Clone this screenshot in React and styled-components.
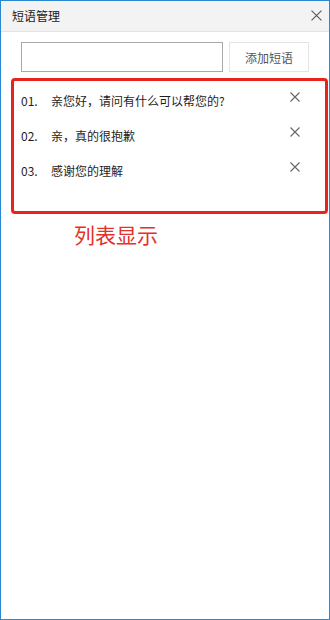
import React, { useState } from "react";
import styled, { createGlobalStyle } from "styled-components";

const GlobalStyle = createGlobalStyle`
  html, body {
    margin: 0;
    padding: 0;
    background: #fff;
  }
  body {
    font-family: "Noto Sans CJK SC", "Noto Sans", sans-serif;
  }
  * { box-sizing: border-box; }
`;

const Window = styled.div`
  width: 330px;
  height: 620px;
  border: 1px solid #2b88d0;
  background: #fff;
  display: flex;
  flex-direction: column;
`;

const TitleBar = styled.div`
  height: 31px;
  flex: none;
  display: flex;
  align-items: center;
  justify-content: space-between;
  padding: 0 7px 1px 11px;
  background: #f3f3f3;
  border-bottom: 1px solid #e3e3e3;
`;

const Title = styled.span`
  font-size: 12px;
  color: #1a1a1a;
`;

const IconButton = styled.button`
  border: none;
  background: transparent;
  padding: 0;
  margin: ${({ offset }) => offset || "0"};
  width: ${({ size }) => size}px;
  height: ${({ size }) => size}px;
  display: flex;
  align-items: center;
  justify-content: center;
  cursor: pointer;
  color: ${({ tone }) => tone || "#555"};
`;

const Body = styled.div`
  flex: 1;
  display: flex;
  flex-direction: column;
`;

const Toolbar = styled.div`
  display: flex;
  gap: 6px;
  padding: 10px 0 0 20px;
`;

const Input = styled.input`
  width: 202px;
  height: 30px;
  border: 1px solid #a8a8a8;
  padding: 0 6px;
  font-size: 12px;
  font-family: inherit;
  outline: none;
`;

const AddButton = styled.button`
  width: 80px;
  height: 30px;
  border: 1px solid #e4e4e4;
  background: #fff;
  color: #555;
  font-size: 12px;
  font-family: inherit;
  padding: 0;
  cursor: pointer;
`;

const ListBox = styled.div`
  margin: 6px 1px 0 10px;
  height: 136px;
  border: 3px solid #e8231c;
  border-radius: 4px;
  padding: 2px 25px 0 7px;
`;

const Row = styled.div`
  height: 35px;
  display: flex;
  align-items: center;
  font-size: 12px;
  color: #1e1e1e;
`;

const Num = styled.span`
  width: 30px;
  flex: none;
`;

const Phrase = styled.span`
  flex: 1;
`;

const Caption = styled.div`
  margin: 8px 0 0 73px;
  font-size: 21px;
  line-height: 24px;
  color: #e3322a;
`;

const Cross = ({ size = 10, width = 1.1 }) => (
  <svg width={size} height={size} viewBox="0 0 10 10">
    <path d="M0.5 0.5 L9.5 9.5 M9.5 0.5 L0.5 9.5" stroke="currentColor" strokeWidth={width} fill="none" />
  </svg>
);

const initial = ["亲您好，请问有什么可以帮您的?", "亲，真的很抱歉", "感谢您的理解"];

export default function App() {
  const [items, setItems] = useState(initial);
  const [text, setText] = useState("");

  const add = () => {
    if (!text.trim()) return;
    setItems([...items, text.trim()]);
    setText("");
  };

  return (
    <>
      <GlobalStyle />
      <Window>
        <TitleBar>
          <Title>短语管理</Title>
          <IconButton size={12}>
            <Cross size={11} width={1} />
          </IconButton>
        </TitleBar>
        <Body>
          <Toolbar>
            <Input value={text} onChange={(e) => setText(e.target.value)} />
            <AddButton onClick={add}>添加短语</AddButton>
          </Toolbar>
          <ListBox>
            {items.map((item, i) => (
              <Row key={i}>
                <Num>{String(i + 1).padStart(2, "0")}.</Num>
                <Phrase>{item}</Phrase>
                <IconButton
                  size={10}
                  tone="#666"
                  offset="-7px 0 0 0"
                  onClick={() => setItems(items.filter((_, j) => j !== i))}
                >
                  <Cross />
                </IconButton>
              </Row>
            ))}
          </ListBox>
          <Caption>列表显示</Caption>
        </Body>
      </Window>
    </>
  );
}
